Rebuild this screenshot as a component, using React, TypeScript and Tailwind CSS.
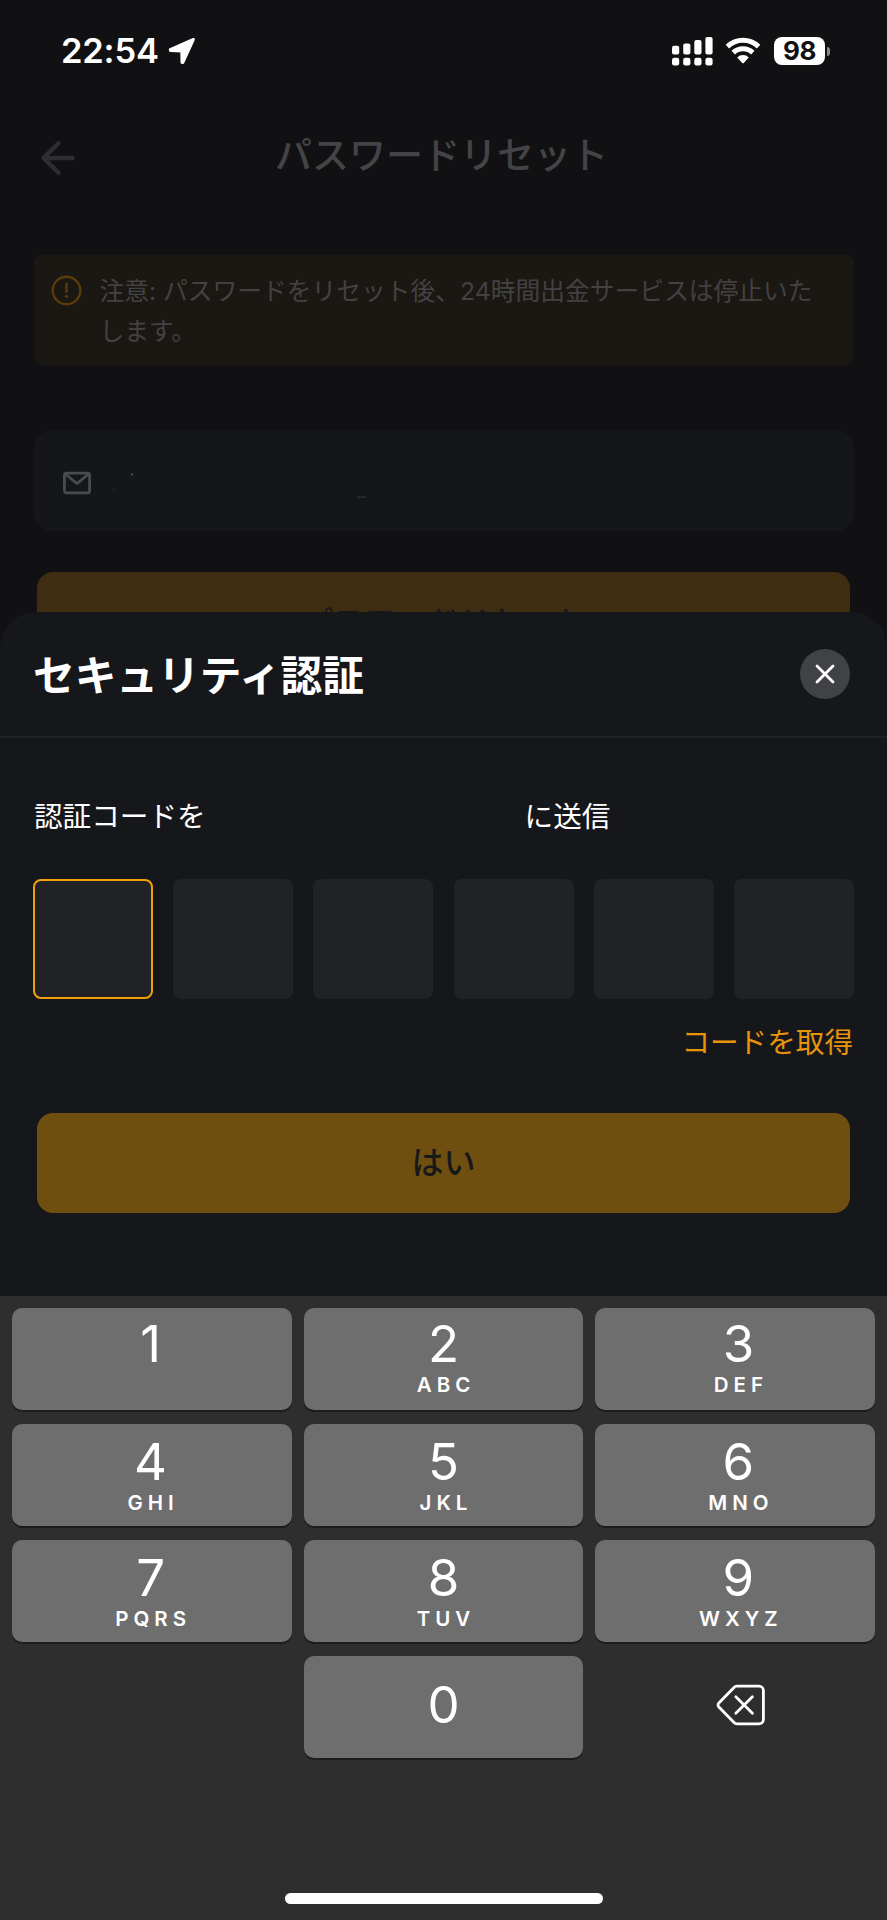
import React from 'react';
import clsx from 'clsx';

interface KeyProps {
  digit: string;
  letters?: string;
  className?: string;
}

const KEYS: KeyProps[] = [
  { digit: '1', className: 'pt-[9px] pr-[3px]' },
  { digit: '2', letters: 'ABC', className: 'pt-[9px]' },
  { digit: '3', letters: 'DEF', className: 'pt-[9px] pl-[7px]' },
  { digit: '4', letters: 'GHI', className: 'pt-[11px] pr-[3px]' },
  { digit: '5', letters: 'JKL', className: 'pt-[11px]' },
  { digit: '6', letters: 'MNO', className: 'pt-[11px] pl-[7px]' },
  { digit: '7', letters: 'PQRS', className: 'pt-[11px] pr-[3px]' },
  { digit: '8', letters: 'TUV', className: 'pt-[11px]' },
  { digit: '9', letters: 'WXYZ', className: 'pt-[11px] pl-[7px]' },
];

const StatusBar: React.FC = () => (
  <div className="flex h-[102px] items-center justify-between pl-[61px] pr-[57px] text-white">
    <div className="flex items-center gap-[9px]">
      <span className="text-[34.5px] leading-[40px] font-semibold tracking-[-0.2px]">22:54</span>
      <svg width="28" height="28" viewBox="0 0 28 28" fill="currentColor" stroke="currentColor" strokeWidth="3" strokeLinejoin="round">
        <path d="M25.4 2.4 2.3 12.6 2.4 13.4 13.8 14 14 25.4 14.9 25.4Z" />
      </svg>
    </div>
    <div className="flex items-center">
      <svg width="41" height="29" viewBox="0 0 41 29" fill="currentColor">
        <rect x="0" y="8.7" width="7.2" height="8.8" rx="2" />
        <rect x="11.2" y="6.5" width="7.2" height="11" rx="2" />
        <rect x="22.3" y="3" width="7.2" height="14.5" rx="2" />
        <rect x="33.4" y="0" width="7.2" height="17.5" rx="2" />
        <rect x="0" y="20.7" width="7.2" height="7.8" rx="2.2" />
        <rect x="11.2" y="20.7" width="7.2" height="7.8" rx="2.2" />
        <rect x="22.3" y="20.7" width="7.2" height="7.8" rx="2.2" />
        <rect x="33.4" y="20.7" width="7.2" height="7.8" rx="2.2" />
      </svg>
      <svg className="ml-[12px]" width="36" height="28" viewBox="0 0 36 28" fill="none" stroke="currentColor" strokeWidth="5">
        <path d="M2.4 9.6a22.4 22.4 0 0 1 31.2 0" />
        <path d="M8.2 15.6a14.2 14.2 0 0 1 19.6 0" />
        <path d="M12.2 20.4a8.4 8.4 0 0 1 11.6 0L19 25.7a1.4 1.4 0 0 1-2 0Z" fill="currentColor" stroke="none" />
      </svg>
      <div className="ml-[13px] flex h-[28px] w-[51px] items-center justify-center rounded-[8px] bg-white text-[26px] leading-[28px] font-bold tracking-[-0.5px] text-[#111113]">
        98
      </div>
      <div className="ml-[2px] h-[9px] w-[3px] rounded-r-full bg-[#8a8a8c]" />
    </div>
  </div>
);

const PageHeader: React.FC = () => (
  <header className="flex h-[106px] items-center justify-between px-[40px] text-[#444446]">
    <svg className="mt-[5px] text-[#2e2d32]" width="36" height="36" viewBox="0 0 36 36" fill="none" stroke="currentColor" strokeWidth="4.4" strokeLinecap="round" strokeLinejoin="round">
      <path d="M32.5 18H3.5M18.5 3.2 3.5 18l15 14.8" />
    </svg>
    <h1 className="pt-[2px] pr-[4px] text-[37px] leading-[48px] font-medium">パスワードリセット</h1>
    <div className="w-[36px]" />
  </header>
);

const Notice: React.FC = () => (
  <div className="mt-[47px] flex h-[110px] rounded-[8px] bg-[#1b1713] pl-[17px] pt-[17px]">
    <svg className="mt-[3px] shrink-0 text-[#5a3c0a]" width="31" height="31" viewBox="0 0 31 31" fill="none" stroke="currentColor" strokeWidth="2.4">
      <circle cx="15.5" cy="15.5" r="13.8" />
      <path d="M15.5 8.6v8.2" strokeLinecap="round" />
      <circle cx="15.5" cy="21.3" r="1.6" fill="currentColor" stroke="none" />
    </svg>
    <p className="ml-[18px] w-[730px] text-[24.75px] leading-[39.5px] text-[#434242]">
      注意: パスワードをリセット後、24時間出金サービスは停止いたします。
    </p>
  </div>
);

const EmailField: React.FC = () => (
  <div className="mt-[66px] flex h-[100px] items-center rounded-[16px] bg-[#141618] pl-[28px]">
    <svg className="mt-[4px] text-[#4a4b4c]" width="30" height="24" viewBox="0 0 30 24" fill="none" stroke="currentColor" strokeWidth="2.8" strokeLinejoin="round">
      <rect x="2.4" y="2.2" width="25.2" height="19.6" rx="2" />
      <path d="M3.4 3 15 12.6 26.6 3" />
    </svg>
    {/* What is left of the hidden address */}
    <svg className="ml-[20px] text-[#4a4b4c]" width="260" height="36" viewBox="0 0 260 36" fill="currentColor">
      <circle cx="20" cy="11.5" r="1.2" />
      <path d="M1.5 25v2l1.5 1" stroke="#2c2d2f" fill="none" />
      <rect x="245" y="33.5" width="9" height="1.2" opacity="0.6" />
    </svg>
  </div>
);

const DigitKey: React.FC<KeyProps> = ({ digit, letters, className }) => (
  <button className={clsx('flex h-[102px] flex-col items-center rounded-[10px] bg-[#6e6e6e] text-white shadow-[0_2px_0_#1c1c1c]', className)}>
    <span className="text-[51px] leading-[54px] font-normal">{digit}</span>
    {letters && <span className="mt-[3px] pl-[5px] text-[20.5px] leading-[22px] font-semibold tracking-[5px]">{letters}</span>}
  </button>
);

const Keyboard: React.FC = () => (
  <div className="flex h-[624px] flex-col items-center bg-[#2e2e2e] px-[12.4px] pt-[12.4px]">
    <div className="grid w-full grid-cols-3 gap-x-[12px] gap-y-[14px]">
      {KEYS.map((key) => (
        <DigitKey key={key.digit} {...key} />
      ))}
      <div />
      <button className="flex h-[102px] items-center justify-center rounded-[10px] bg-[#6e6e6e] pb-[4px] text-[51px] leading-[54px] text-white shadow-[0_2px_0_#1c1c1c]">
        0
      </button>
      <button className="flex h-[102px] items-center justify-center pb-[4px] pl-[12px] text-white">
        <svg width="50" height="42" viewBox="0 0 50 42" fill="none" stroke="currentColor" strokeWidth="2.8" strokeLinecap="round" strokeLinejoin="round">
          <path d="M20.8 2.2H43a4.4 4.4 0 0 1 4.4 4.4v28.8A4.4 4.4 0 0 1 43 39.8H20.8a4 4 0 0 1-2.8-1.2L2.9 23.1a3 3 0 0 1 0-4.2L18 3.4a4 4 0 0 1 2.8-1.2Z" />
          <path d="M19.8 12.8 36.4 29.2M36.4 12.8 19.8 29.2" />
        </svg>
      </button>
    </div>
    <div className="mt-[134.6px] h-[11px] w-[318px] rounded-full bg-white" />
  </div>
);

const SecuritySheet: React.FC = () => (
  <section className="absolute inset-x-0 bottom-0 flex h-[1308px] flex-col rounded-t-[36px] bg-[#16171a] text-white">
    <div className="flex h-[126px] items-center justify-between border-b-2 border-[#202125] pl-[33px] pr-[37px]">
      <h2 className="pt-[4px] text-[41.7px] leading-[52px] font-bold">セキュリティ認証</h2>
      <button className="flex h-[50px] w-[50px] items-center justify-center rounded-full bg-[#404245]">
        <svg width="22" height="22" viewBox="0 0 22 22" fill="none" stroke="currentColor" strokeWidth="2.8" strokeLinecap="round">
          <path d="M3 3l16 16M19 3 3 19" />
        </svg>
      </button>
    </div>
    <div className="flex flex-1 flex-col px-[33px]">
      <p className="mt-[59px] flex pl-px text-[28.6px] leading-[40px]">
        <span>認証コードを</span>
        <span className="ml-[319px]">に送信</span>
      </p>
      <div className="mt-[42px] grid grid-cols-6 gap-x-[20.4px]">
        <div className="h-[120px] rounded-[8px] border-2 border-[#f0a00a] bg-[#212225]" />
        {[2, 3, 4, 5, 6].map((n) => (
          <div key={n} className="h-[120px] rounded-[8px] bg-[#212225]" />
        ))}
      </div>
      <button className="mt-[24px] mr-px self-end text-[28.6px] leading-[40px] text-[#e8930c]">コードを取得</button>
      <button className="mx-[4px] mt-[50px] h-[100px] rounded-[16px] bg-[#6f4f10] text-[32px] leading-[40px] font-medium text-[#17181a]">
        はい
      </button>
    </div>
    <Keyboard />
  </section>
);

export default function App() {
  return (
    <div className="relative h-[1920px] w-[887px] overflow-hidden bg-[#111113] font-['Inter','Noto_Sans_CJK_JP',sans-serif]">
      <StatusBar />
      <PageHeader />
      <main className="flex flex-col px-[33.5px]">
        <Notice />
        <EmailField />
        <button className="mx-[3.5px] mt-[41px] h-[100px] rounded-[16px] bg-[#3f2d12] pt-px text-[31.5px] leading-[40px] font-medium text-[#17181a]">
          パスワードリセット
        </button>
      </main>
      <SecuritySheet />
    </div>
  );
}
